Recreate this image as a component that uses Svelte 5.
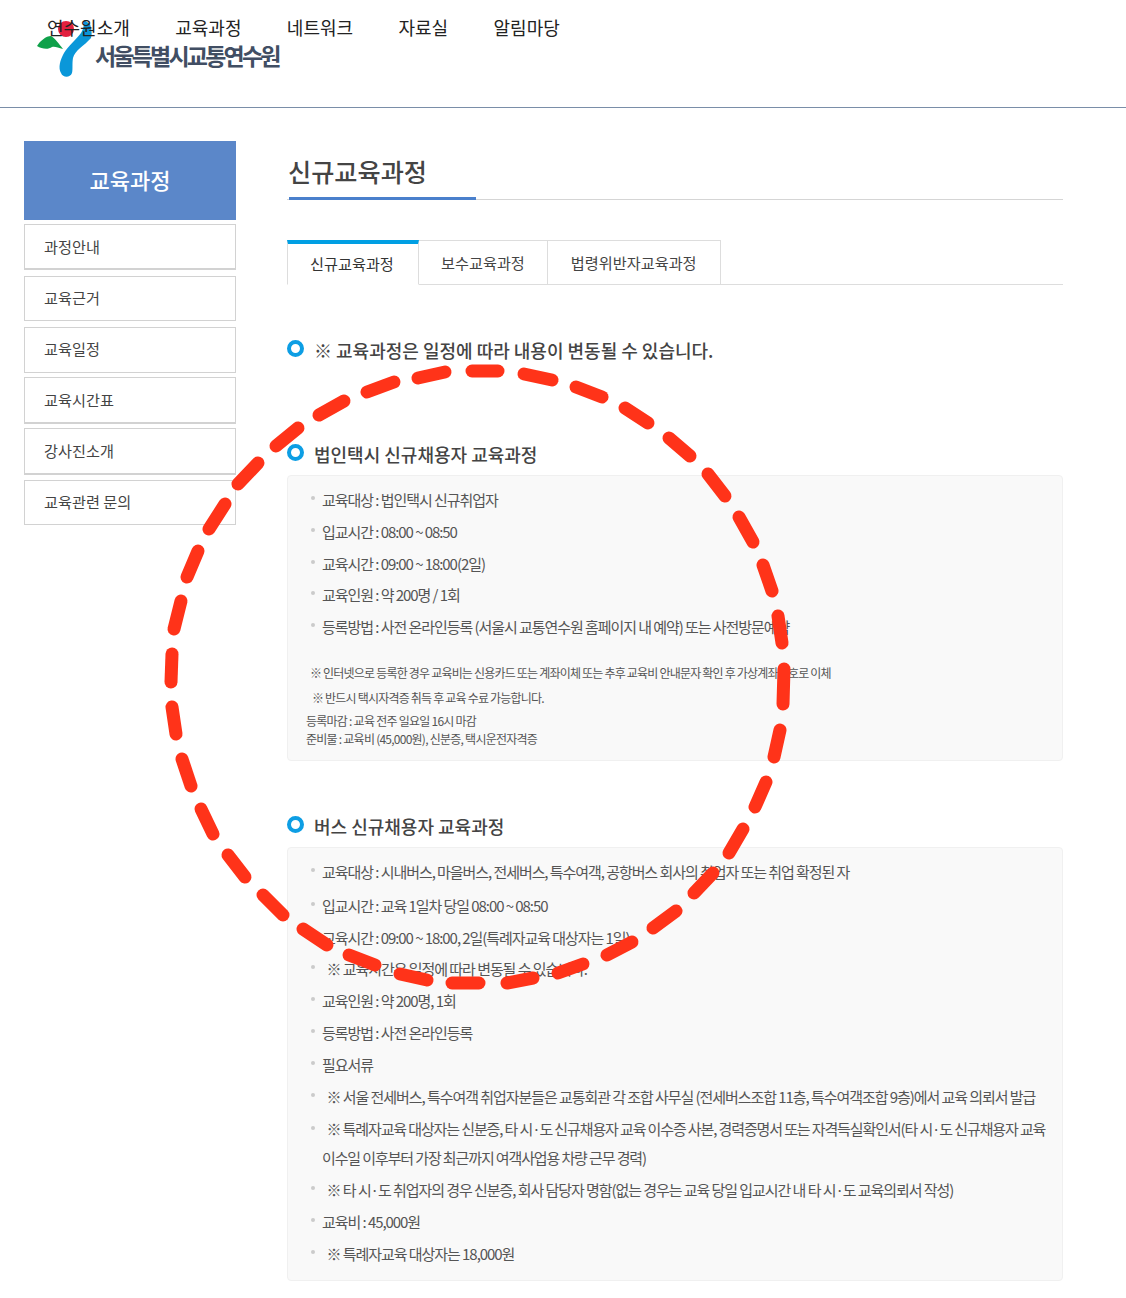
<script lang="ts">
	const navItems = ['연수원소개', '교육과정', '네트워크', '자료실', '알림마당'];
	const sideItems = ['과정안내', '교육근거', '교육일정', '교육시간표', '강사진소개', '교육관련 문의'];
	const tabs = ['신규교육과정', '보수교육과정', '법령위반자교육과정'];

	const taxiItems = [
		'교육대상 : 법인택시 신규취업자',
		'입교시간 : 08:00 ~ 08:50',
		'교육시간 : 09:00 ~ 18:00(2일)',
		'교육인원 : 약 200명 / 1회',
		'등록방법 : 사전 온라인등록 (서울시 교통연수원 홈페이지 내 예약) 또는 사전방문예약'
	];

	const busItems = [
		'교육대상 : 시내버스, 마을버스, 전세버스, 특수여객, 공항버스 회사의 취업자 또는 취업 확정된 자',
		'입교시간 : 교육 1일차 당일 08:00 ~ 08:50',
		'교육시간 : 09:00 ~ 18:00, 2일(특례자교육 대상자는 1일)',
		'\u00a0\u00a0※ 교육시간은 일정에 따라 변동될 수 있습니다.',
		'교육인원 : 약 200명, 1회',
		'등록방법 : 사전 온라인등록',
		'필요서류',
		'\u00a0\u00a0※ 서울 전세버스, 특수여객 취업자분들은 교통회관 각 조합 사무실 (전세버스조합 11층, 특수여객조합 9층)에서 교육 의뢰서 발급',
		'\u00a0\u00a0※ 특례자교육 대상자는 신분증, 타 시·도 신규채용자 교육 이수증 사본, 경력증명서 또는 자격득실확인서(타 시·도 신규채용자 교육 이수일 이후부터 가장 최근까지 여객사업용 차량 근무 경력)',
		'\u00a0\u00a0※ 타 시·도 취업자의 경우 신분증, 회사 담당자 명함(없는 경우는 교육 당일 입교시간 내 타 시·도 교육의뢰서 작성)',
		'교육비 : 45,000원',
		'\u00a0\u00a0※ 특례자교육 대상자는 18,000원'
	];

	// hand drawn dashes of the red circle, clockwise from the top
	const dashes = [
		[472, 371, 498, 371], [524, 374, 552, 380], [576, 387, 602, 397], [625, 408, 648, 423],
		[669, 438, 690, 456], [708, 474, 725, 496], [739, 517, 753, 542], [763, 565, 772, 591],
		[778, 616, 782, 643], [784, 669, 783, 704], [780, 730, 774, 757], [766, 782, 755, 807],
		[743, 829, 729, 853], [713, 873, 694, 893], [676, 911, 653, 928], [632, 942, 607, 955],
		[583, 964, 558, 973], [533, 978, 507, 983], [479, 983, 452, 983], [427, 980, 400, 974],
		[375, 965, 349, 955], [327, 945, 303, 929], [283, 915, 263, 895], [245, 877, 228, 855],
		[213, 834, 201, 809], [191, 786, 182, 759], [176, 734, 172, 707], [171, 682, 172, 654],
		[174, 629, 181, 601], [187, 577, 198, 551], [209, 529, 225, 504], [238, 484, 258, 463],
		[276, 446, 298, 428], [319, 415, 344, 401], [367, 392, 394, 382], [418, 378, 445, 372]
	];
</script>

<div class="page">
	<header class="top">
		<nav class="gnb">
			{#each navItems as item}
				<span>{item}</span>
			{/each}
		</nav>
		<div class="logo">
			<svg width="60" height="62" viewBox="36 17 60 62" aria-hidden="true">
				<path d="M37 46C40 41 46 36 51 36C55 38 59 44 63 49C58 48 55 46 52 47C48 50 42 49 37 46Z" fill="#0fa14a" />
				<path d="M84 20L90 24C92 30 92 35 91 38C84 46 75 50 73 58C72 63 73 70 72 73C70 78 63 78 61 73C58 68 60 60 64 53C68 46 76 40 81 33C84 28 84 24 84 20Z" fill="#0a97d9" />
				<circle cx="66" cy="29" r="8" fill="#e2203f" />
			</svg>
			<span>서울특별시교통연수원</span>
		</div>
	</header>

	<div class="body">
		<aside class="side">
			<h2>교육과정</h2>
			<ul>
				{#each sideItems as item}
					<li>{item}</li>
				{/each}
			</ul>
		</aside>

		<main class="content">
			<h1><span>신규교육과정</span></h1>

			<div class="tabs">
				{#each tabs as tab, i}
					<div class="tab" class:active={i === 0}>{tab}</div>
				{/each}
			</div>

			<h3 class="notice"><i class="ring"></i>※ 교육과정은 일정에 따라 내용이 변동될 수 있습니다.</h3>

			<h3 class="taxi-head"><i class="ring"></i>법인택시 신규채용자 교육과정</h3>
			<div class="box">
				<ul>
					{#each taxiItems as item}
						<li><b class="dot"></b><span>{item}</span></li>
					{/each}
				</ul>
				<p class="note first">※ 인터넷으로 등록한 경우 교육비는 신용카드 또는 계좌이체 또는 추후 교육비 안내문자 확인 후 가상계좌번호로 이체</p>
				<p class="note second">※ 반드시 택시자격증 취득 후 교육 수료 가능합니다.</p>
				<p class="small first">등록마감 : 교육 전주 일요일 16시 마감</p>
				<p class="small">준비물 : 교육비 (45,000원), 신분증, 택시운전자격증</p>
			</div>

			<h3 class="bus-head"><i class="ring"></i>버스 신규채용자 교육과정</h3>
			<div class="box bus">
				<ul>
					{#each busItems as item}
						<li><b class="dot"></b><span>{item}</span></li>
					{/each}
				</ul>
			</div>
		</main>
	</div>

	<svg class="scribble" width="1126" height="1298" viewBox="0 0 1126 1298" aria-hidden="true">
		{#each dashes as d}
			<line x1={d[0]} y1={d[1]} x2={d[2]} y2={d[3]} />
		{/each}
	</svg>
</div>

<style>
	:global(body) {
		margin: 0;
		background: #fff;
		font-family: "Noto Sans CJK KR", "Noto Sans", sans-serif;
		color: #333;
	}

	.page {
		position: relative;
		width: 1126px;
		height: 1298px;
		overflow: hidden;
	}

	.top {
		position: relative;
		height: 107px;
		border-bottom: 1px solid #7a8ea8;
	}

	.gnb {
		display: flex;
		gap: 45.4px;
		padding: 13px 0 0 47px;
		font-size: 18px;
		line-height: 28px;
		color: #222;
		position: relative;
		z-index: 1;
	}

	.logo {
		position: absolute;
		left: 36px;
		top: 17px;
		display: flex;
		color: #414e63;
		font-size: 23px;
		font-weight: 700;
		letter-spacing: -2.8px;
	}

	.logo span {
		margin: 21px 0 0 -1px;
		line-height: 34px;
	}

	.body {
		display: flex;
		padding: 33px 0 0 24px;
	}

	.side {
		width: 212px;
		flex: none;
	}

	.side h2 {
		margin: 0 0 4px;
		height: 79px;
		line-height: 77px;
		background: #5b87c9;
		color: #fff;
		font-size: 22px;
		font-weight: 500;
		text-align: center;
	}

	.side ul {
		list-style: none;
		margin: 0;
		padding: 0;
		display: flex;
		flex-direction: column;
		gap: 5px;
	}

	.side li {
		height: 44px;
		line-height: 43px;
		border: 1px solid #d2d2d2;
		padding-left: 19px;
		font-size: 15.2px;
		color: #444;
	}

	.side li:nth-child(1) {
		height: 43px;
		border-bottom-width: 2px;
		margin-bottom: 1px;
	}

	.side li:nth-child(2) {
		height: 43px;
		line-height: 41px;
		margin-bottom: 1px;
	}

	.side li:nth-child(3) {
		line-height: 40px;
		margin-bottom: -1px;
	}

	.side li:nth-child(4) {
		border-bottom-width: 2px;
		margin-bottom: -1px;
	}

	.side li:nth-child(5) {
		border-bottom-width: 2px;
	}

	.side li:nth-child(6) {
		height: 43px;
		line-height: 41px;
	}

	.content {
		width: 776px;
		margin: -1px 0 0 51px;
	}

	h1 {
		margin: 0;
		height: 59px;
		border-bottom: 1px solid #d5d5d5;
		font-size: 25.2px;
		font-weight: 500;
		color: #444;
	}

	h1 span {
		display: block;
		width: 187px;
		margin-left: 2px;
		height: 57px;
		line-height: 62px;
		text-indent: -1px;
		border-bottom: 3px solid #4a80cc;
		white-space: nowrap;
	}

	.tabs {
		display: flex;
		height: 44px;
		margin-top: 40px;
		border-bottom: 1px solid #ddd;
	}

	.tab {
		padding: 0 23px;
		line-height: 42px;
		border: 1px solid #ddd;
		border-left: 0;
		border-bottom: 0;
		font-size: 15.2px;
		color: #444;
		white-space: nowrap;
	}

	.tab:nth-child(2) {
		padding: 0 22px;
	}

	.tab.active {
		width: 132px;
		padding: 0 22px;
		box-sizing: border-box;
		border-top: 4px solid #009fe3;
		border-left: 1px solid #ddd;
		border-bottom: 1px solid #fff;
		height: 45px;
		line-height: 38px;
		color: #333;
	}

	h3 {
		margin: 0;
		display: flex;
		align-items: center;
		font-size: 18px;
		font-weight: 500;
		line-height: 28px;
		color: #444;
		white-space: nowrap;
	}

	.ring {
		flex: none;
		width: 9px;
		height: 9px;
		margin: -4px 10px 0 0;
		border: 4px solid #0d9ee4;
		border-radius: 50%;
	}

	.notice {
		margin-top: 51px;
	}

	.taxi-head {
		margin-top: 76px;
	}

	.bus-head {
		margin-top: 51px;
	}

	.box {
		box-sizing: border-box;
		margin-top: 7px;
		height: 286px;
		background: #f9f9f9;
		border: 1px solid #f0f0f0;
		border-radius: 4px;
		padding: 8px 5px 0 18px;
		font-size: 15px;
		color: #555;
		letter-spacing: -1.06px;
	}

	.box.bus {
		height: 434px;
	}

	.box ul {
		list-style: none;
		margin: 0;
		padding: 0;
	}

	.box li {
		display: flex;
		line-height: 31.8px;
	}

	.bus li:first-child {
		margin-bottom: 2px;
	}

	.bus li:nth-child(9) {
		line-height: 29.3px;
		padding: 1.5px 0;
		letter-spacing: -1.12px;
	}

	.dot {
		flex: none;
		width: 4px;
		height: 4px;
		margin: 12px 7px 0 5px;
		border-radius: 50%;
		background: #cbcbcb;
	}

	.note, .small {
		margin: 0;
		font-size: 12px;
		white-space: nowrap;
	}

	.note {
		line-height: 25px;
		padding-left: 4px;
		letter-spacing: -0.8px;
	}

	.note.first {
		margin-top: 17px;
	}

	.note.second {
		padding-left: 6px;
	}

	.small {
		line-height: 18.5px;
		letter-spacing: -0.75px;
	}

	.small.first {
		margin-top: 2px;
	}

	.scribble {
		position: absolute;
		left: 0;
		top: 0;
		pointer-events: none;
		z-index: 2;
		fill: none;
		stroke: #ff3319;
		stroke-width: 13px;
		stroke-linecap: round;
	}
</style>
